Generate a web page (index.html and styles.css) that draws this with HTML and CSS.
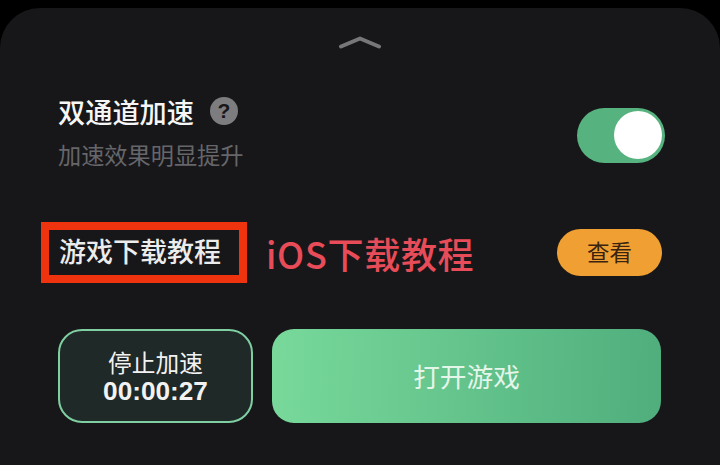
FILE: index.html
```html
<!DOCTYPE html>
<html lang="zh-CN">
<head>
<meta charset="utf-8">
<title>双通道加速</title>
<link rel="stylesheet" href="styles.css">
</head>
<body>
<main class="sheet">
  <svg class="chevron" width="44" height="14" viewBox="0 0 44 14" aria-hidden="true">
    <path d="M3 11.5 L22 3.5 L41 11.5" fill="none" stroke="#77777a" stroke-width="4" stroke-linecap="round" stroke-linejoin="round"/>
  </svg>
  <section class="dual">
    <div class="dual-text">
      <div class="dual-title">
        <span>双通道加速</span>
        <span class="help">?</span>
      </div>
      <div class="dual-sub">加速效果明显提升</div>
    </div>
    <div class="toggle"><span class="thumb"></span></div>
  </section>
  <section class="tutorial">
    <div class="marked">游戏下载教程</div>
    <div class="ios">iOS下载教程</div>
    <div class="view">查看</div>
  </section>
  <section class="actions">
    <div class="stop">
      <span class="stop-label">停止加速</span>
      <span class="stop-time">00:00:27</span>
    </div>
    <div class="open">打开游戏</div>
  </section>
</main>
</body>
</html>
```
FILE: styles.css
```css
* { box-sizing: border-box; }
html, body { margin: 0; height: 465px; overflow: hidden; background: #000; }
body {
  padding-top: 8px;
  font-family: "Noto Sans CJK SC", "Liberation Sans", sans-serif;
}
.sheet {
  width: 720px;
  height: 457px;
  background: #17171a;
  border-radius: 40px 40px 0 0;
  padding: 0 55px 0 41px;
  display: flex;
  flex-direction: column;
}
.chevron { align-self: center; margin: 27px 0 0 14px; flex: none; }
.dual {
  margin: 44px 0 0 17px;
  display: flex;
  justify-content: space-between;
  align-items: center;
  height: 84px;
}
.dual-text {
  align-self: flex-start;
  display: flex;
  flex-direction: column;
  gap: 10px;
}
.dual-title {
  display: flex;
  align-items: center;
  gap: 16px;
  color: #f6f6f6;
  font-size: 27.2px;
  line-height: 36px;
  font-weight: 500;
}
.help {
  width: 28px;
  height: 28px;
  border-radius: 50%;
  background: #7d7d7f;
  color: #17171a;
  font-family: "Liberation Sans", sans-serif;
  font-size: 21px;
  font-weight: 700;
  line-height: 28px;
  text-align: center;
}
.dual-sub {
  color: #66666a;
  font-size: 23.2px;
  line-height: 30px;
}
.toggle {
  width: 88px;
  height: 55px;
  border-radius: 28px;
  background: #56b27f;
  display: flex;
  justify-content: flex-end;
  align-items: center;
  padding-right: 3px;
}
.thumb { width: 48px; height: 48px; border-radius: 50%; background: #fff; }
.tutorial {
  margin-top: 45px;
  display: flex;
  align-items: center;
  height: 61px;
}
.marked {
  width: 206px;
  height: 61px;
  border: 8px solid #f0330f;
  padding-left: 10px;
  color: #ececec;
  font-size: 27px;
  font-weight: 500;
  line-height: 42px;
  white-space: nowrap;
}
.ios {
  margin-left: 19px;
  color: #e84c58;
  font-size: 36px;
  font-weight: 500;
  letter-spacing: 0.7px;
  line-height: 50px;
  white-space: nowrap;
}
.view {
  margin-left: auto;
  margin-right: 3px;
  width: 105px;
  height: 47px;
  border-radius: 24px;
  background: #f0a033;
  color: #3a2410;
  font-size: 22.5px;
  line-height: 45px;
  text-align: center;
}
.actions {
  margin: 46px 4px 0 17px;
  display: flex;
  gap: 19px;
  height: 94px;
}
.stop {
  width: 195px;
  border: 2px solid #7fcfa2;
  border-radius: 24px;
  background: #1f2928;
  color: #f2f2f2;
  display: flex;
  flex-direction: column;
  align-items: center;
  justify-content: center;
}
.stop-label { font-size: 23.7px; line-height: 30px; }
.stop-time {
  font-family: "Liberation Sans", sans-serif;
  font-size: 26.2px;
  font-weight: 700;
  line-height: 28px;
}
.open {
  flex: 1;
  border-radius: 22px;
  background: linear-gradient(92deg, #78d99b 0%, #4fae7c 100%);
  color: #e4f5ea;
  font-size: 26.7px;
  line-height: 94px;
  text-align: center;
}
```
